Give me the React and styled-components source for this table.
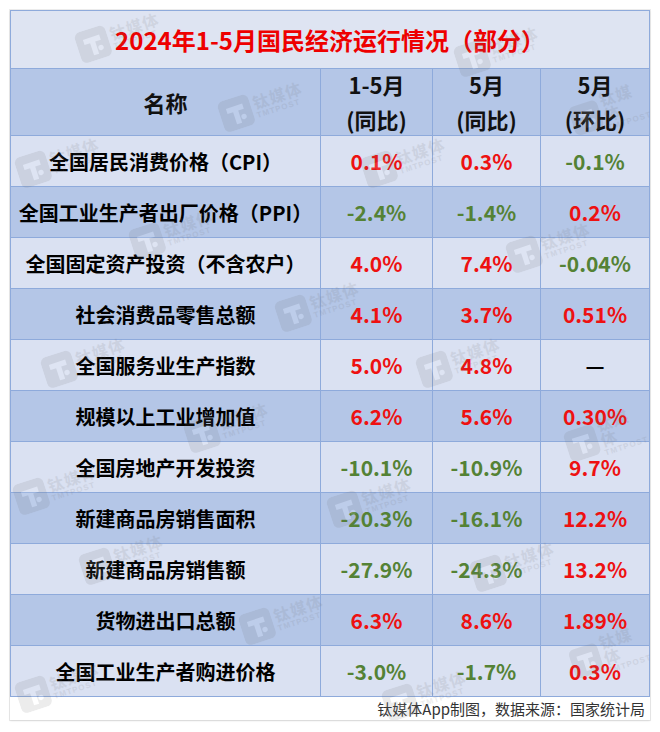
import React from "react";
import styled, { createGlobalStyle } from "styled-components";

const GlobalStyle = createGlobalStyle`
  body {
    margin: 0;
    background: #ffffff;
    font-family: "Noto Sans CJK SC", "Noto Sans", sans-serif;
  }
`;

const Page = styled.div`
  width: 660px;
  height: 732px;
  padding: 10px 10px 0;
  box-sizing: border-box;
`;

const Card = styled.div`
  position: relative;
  width: 640px;
  height: 710px;
  overflow: hidden;
  background: #ffffff;
  box-shadow: 0 1px 2px rgba(0, 0, 0, 0.1), 0 0 0 1px #ececec;
`;

const Table = styled.div`
  display: grid;
  grid-template-columns: 310px 112px 108px 109px;
  grid-template-rows: 58px 67px repeat(11, 51px);
  border-left: 1px solid #8eaadb;
  border-top: 1px solid #8eaadb;
`;

const Cell = styled.div`
  display: flex;
  flex-direction: column;
  align-items: center;
  justify-content: center;
  box-sizing: border-box;
  border-right: 1px solid #8eaadb;
  border-bottom: 1px solid #8eaadb;
  background: ${(p) => (p.$dark ? "#b4c6e7" : "#dae1f2")};
  font-weight: 700;
  white-space: nowrap;
`;

const TitleCell = styled(Cell)`
  grid-column: 1 / -1;
  background: #dee4f2;
  color: #ee0000;
  font-size: 24px;
`;

const HeadCell = styled(Cell)`
  font-size: 22px;
  line-height: 35px;
  color: #111111;
`;

const NameCell = styled(Cell)`
  font-size: 20px;
  color: #000000;
`;

const ValueCell = styled(Cell)`
  font-size: 21px;
  color: ${(p) => p.$color};
`;

const Footer = styled.div`
  text-align: right;
  padding-right: 5px;
  font-size: 15px;
  line-height: 24px;
  color: #333333;
`;

const Watermark = styled.div`
  position: absolute;
  left: ${(p) => p.$x}px;
  top: ${(p) => p.$y}px;
  display: flex;
  align-items: center;
  gap: 3px;
  color: #707070;
  opacity: 0.13;
  transform: rotate(-18deg);
  pointer-events: none;
`;

const MarkText = styled.div`
  display: flex;
  flex-direction: column;
  line-height: 1;
`;

const MarkName = styled.span`
  font-size: 16px;
  font-weight: 700;
  letter-spacing: 1px;
`;

const MarkSub = styled.span`
  margin-top: 2px;
  font-family: "Liberation Sans", sans-serif;
  font-size: 8px;
  font-weight: 700;
  letter-spacing: 1px;
`;

const rows = [
  ["全国居民消费价格（CPI）", "0.1%", "0.3%", "-0.1%"],
  ["全国工业生产者出厂价格（PPI）", "-2.4%", "-1.4%", "0.2%"],
  ["全国固定资产投资（不含农户）", "4.0%", "7.4%", "-0.04%"],
  ["社会消费品零售总额", "4.1%", "3.7%", "0.51%"],
  ["全国服务业生产指数", "5.0%", "4.8%", "—"],
  ["规模以上工业增加值", "6.2%", "5.6%", "0.30%"],
  ["全国房地产开发投资", "-10.1%", "-10.9%", "9.7%"],
  ["新建商品房销售面积", "-20.3%", "-16.1%", "12.2%"],
  ["新建商品房销售额", "-27.9%", "-24.3%", "13.2%"],
  ["货物进出口总额", "6.3%", "8.6%", "1.89%"],
  ["全国工业生产者购进价格", "-3.0%", "-1.7%", "0.3%"],
];

const marks = [
  [66, 10], [445, 24], [209, 79], [560, 79], [6, 135], [352, 135],
  [120, 207], [497, 220], [266, 279], [32, 335], [407, 335],
  [175, 400], [555, 404], [4, 462], [318, 475], [70, 532],
  [461, 539], [230, 592], [560, 622], [6, 660], [373, 668],
];

const colorOf = (v) => {
  if (v === "—") return "#000000";
  return v.startsWith("-") ? "#548235" : "#ee1111";
};

const Logo = () => (
  <svg width="32" height="32" viewBox="0 0 30 30">
    <rect x="0" y="0" width="30" height="30" rx="6" fill="currentColor" />
    <path d="M7 8h16v5h-5.5v12h-5V13H7z" fill="#ffffff" />
    <circle cx="21" cy="20" r="2.5" fill="#ffffff" />
  </svg>
);

const App = () => (
  <Page>
    <GlobalStyle />
    <Card>
      <Table>
        <TitleCell>2024年1-5月国民经济运行情况（部分）</TitleCell>
        <HeadCell $dark>名称</HeadCell>
        <HeadCell $dark>
          <span>1-5月</span>
          <span>(同比)</span>
        </HeadCell>
        <HeadCell $dark>
          <span>5月</span>
          <span>(同比)</span>
        </HeadCell>
        <HeadCell $dark>
          <span>5月</span>
          <span>(环比)</span>
        </HeadCell>
        {rows.map((r, i) => (
          <React.Fragment key={r[0]}>
            <NameCell $dark={i % 2 === 1}>{r[0]}</NameCell>
            {r.slice(1).map((v, j) => (
              <ValueCell key={j} $dark={i % 2 === 1} $color={colorOf(v)}>
                {v}
              </ValueCell>
            ))}
          </React.Fragment>
        ))}
      </Table>
      <Footer>钛媒体App制图，数据来源：国家统计局</Footer>
      {marks.map(([x, y], i) => (
        <Watermark key={i} $x={x} $y={y}>
          <Logo />
          <MarkText>
            <MarkName>钛媒体</MarkName>
            <MarkSub>TMTPOST</MarkSub>
          </MarkText>
        </Watermark>
      ))}
    </Card>
  </Page>
);

export default App;
